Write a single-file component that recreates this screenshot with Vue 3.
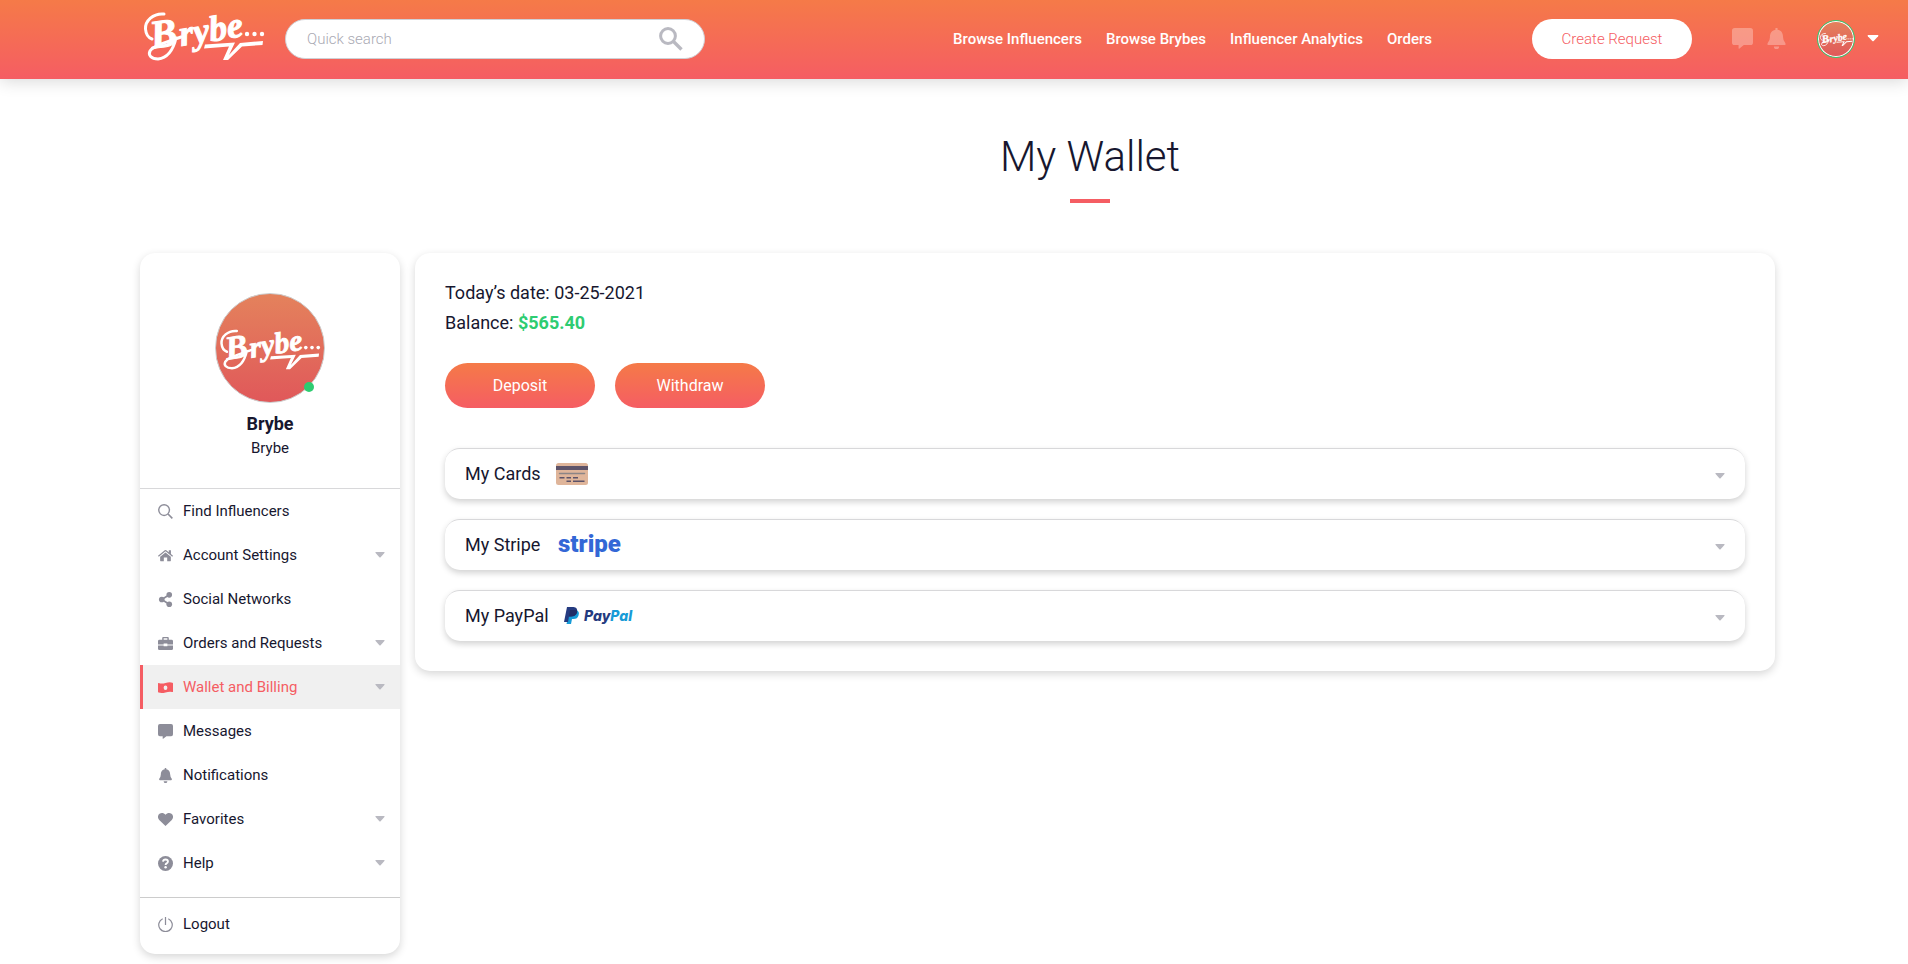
<script setup>
import { ref } from 'vue'

const query = ref('')
const nav = ['Browse Influencers', 'Browse Brybes', 'Influencer Analytics', 'Orders']
const menu = [
  { label: 'Find Influencers', icon: 'search' },
  { label: 'Account Settings', icon: 'home', more: true },
  { label: 'Social Networks', icon: 'share' },
  { label: 'Orders and Requests', icon: 'briefcase', more: true },
  { label: 'Wallet and Billing', icon: 'money', more: true, active: true },
  { label: 'Messages', icon: 'message' },
  { label: 'Notifications', icon: 'bell' },
  { label: 'Favorites', icon: 'heart', more: true },
  { label: 'Help', icon: 'help', more: true },
]
const methods = [
  { label: 'My Cards', logo: 'card' },
  { label: 'My Stripe', logo: 'stripe' },
  { label: 'My PayPal', logo: 'paypal' },
]
</script>

<template>
  <div class="page">
    <svg class="sprite" aria-hidden="true">
      <symbol id="brand" viewBox="0 0 121 53" overflow="visible">
        <g transform="rotate(-9 50 30)" fill="currentColor" stroke="currentColor" font-family="'Liberation Serif', serif" font-weight="700" font-style="italic">
          <text x="7" y="34" font-size="40" stroke-width="1">B</text>
          <text x="36" y="36" font-size="36" stroke-width="1">rybe</text>
        </g>
        <path d="M20 6C9 5 1 13 1.500 21C2 27 5 30 8 31M32 30C29 43 23 50 14 51C7 51 4 47 6 43C10 37 24 34 37 29" fill="none" stroke="currentColor" stroke-width="3" stroke-linecap="round" />
        <circle cx="103" cy="26" r="2.200" fill="currentColor" />
        <circle cx="110.500" cy="26" r="2.200" fill="currentColor" />
        <circle cx="118" cy="26" r="2.200" fill="currentColor" />
        <path d="M61 36.500L91 34.500L85 47L96 35L119 33L118.500 37L98 38.500L84 52H79L85 38.500L60 40.500Z" fill="currentColor" />
      </symbol>
      <symbol id="search" viewBox="0 0 16 16">
        <circle cx="6.500" cy="6.500" r="5.700" fill="none" stroke="currentColor" stroke-width="1.500" />
        <path d="M10.700 10.700L15.300 15.300" stroke="currentColor" stroke-width="1.700" />
      </symbol>
      <symbol id="home" viewBox="0 0 16 16">
        <path d="M0 8.300L7.200 2.300Q8 1.700 8.800 2.300L11.500 4.500V2.500H13.800V6.400L16 8.300L15.200 9.300L8 3.500L.8 9.300Z" fill="currentColor" />
        <path d="M2.300 9.300L8 4.700L13.700 9.300V13.500Q13.700 14 13.200 14H9.800V10H6.200V14H2.800Q2.300 14 2.300 13.500Z" fill="currentColor" />
      </symbol>
      <symbol id="share" viewBox="0 0 16 16">
        <path d="M12 3L4 8L12 13" fill="none" stroke="currentColor" stroke-width="1.800" />
        <circle cx="12" cy="3" r="3" fill="currentColor" />
        <circle cx="4" cy="8" r="3" fill="currentColor" />
        <circle cx="12" cy="13" r="3" fill="currentColor" />
      </symbol>
      <symbol id="briefcase" viewBox="0 0 16 16">
        <path d="M4.500 4V2Q4.500 1 5.500 1H10.500Q11.500 1 11.500 2V4H14.500Q16 4 16 5.500V9H10V8H6V9H0V5.500Q0 4 1.500 4ZM6 2.500V4H10V2.500ZM0 10H6V11H10V10H16V13.500Q16 15 14.500 15H1.500Q0 15 0 13.500Z" fill="currentColor" fill-rule="evenodd" />
      </symbol>
      <symbol id="money" viewBox="0 0 16 16">
        <path fill-rule="evenodd" d="M.8 3.200Q4 4.500 8 3.200Q12 1.900 15.400 2.800Q16 3 16 3.600V12.200Q16 13 15.200 12.800Q12 12.300 8 13.200Q4 14.300 .6 13.400Q0 13.200 0 12.600V3.800Q0 3 .8 3.200ZM8 5.800A2 2.400 0 1 0 8 10.600A2 2.400 0 1 0 8 5.800Z" fill="currentColor" />
      </symbol>
      <symbol id="message" viewBox="0 0 16 16">
        <path d="M2 0H14Q16 0 16 2V11Q16 13 14 13H9L5.500 15.800Q5 16 5 15.500V13H2Q0 13 0 11V2Q0 0 2 0Z" fill="currentColor" />
      </symbol>
      <symbol id="bell" viewBox="0 0 16 16">
        <path d="M7.200 0H8.800V1.300C12 1.800 13 4.500 13 7Q13 9.500 14.700 11.500Q15.300 13 14 13H2Q.7 13 1.300 11.500Q3 9.500 3 7C3 4.500 4 1.800 7.200 1.300ZM6 14H10Q10 16 8 16Q6 16 6 14Z" fill="currentColor" />
      </symbol>
      <symbol id="heart" viewBox="0 0 16 16">
        <path d="M8 15L1.300 8.500C-.7 6.300-.4 3.200 1.600 1.800C3.700.4 6.300.8 8 3C9.700.8 12.300.4 14.400 1.800C16.400 3.200 16.700 6.300 14.700 8.500Z" fill="currentColor" />
      </symbol>
      <symbol id="help" viewBox="0 0 16 16">
        <circle cx="8" cy="8" r="8" fill="currentColor" />
        <path d="M5.300 6Q5.600 3.700 8 3.700Q10.600 3.700 10.600 5.900Q10.600 7.200 9.200 7.900Q8.100 8.400 8.100 9.500" fill="none" stroke="#fff" stroke-width="2" />
        <circle cx="8.100" cy="12" r="1.300" fill="#fff" />
      </symbol>
      <symbol id="power" viewBox="0 0 16 16">
        <path d="M5 1.800A7.200 7.200 0 1 0 11 1.800M8 0V8.500" fill="none" stroke="currentColor" stroke-width="1.300" />
      </symbol>
      <symbol id="caret" viewBox="0 0 10 6">
        <path d="M.8 0H9.200Q10 .2 9.400 1L5.600 5.200Q5 5.700 4.400 5.200L.6 1Q0 .2.800 0Z" fill="currentColor" />
      </symbol>
    </svg>

    <header class="topbar">
      <a href="#" class="brand" aria-label="Brybe"><svg><use href="#brand" /></svg></a>
      <form class="search" role="search" @submit.prevent>
        <input v-model="query" type="text" placeholder="Quick search" aria-label="Quick search" />
        <button type="submit" aria-label="Search">
          <svg viewBox="0 0 24 24"><circle cx="9" cy="9" r="7.400" fill="none" stroke="currentColor" stroke-width="3" /><path d="M14.500 14.500L22.500 22.500" stroke="currentColor" stroke-width="3.400" /></svg>
        </button>
      </form>
      <nav class="nav">
        <a v-for="item in nav" :key="item" href="#">{{ item }}</a>
      </nav>
      <button type="button" class="create">Create Request</button>
      <div class="alerts">
        <button type="button" aria-label="Messages"><svg><use href="#message" /></svg></button>
        <button type="button" aria-label="Notifications"><svg><use href="#bell" /></svg></button>
      </div>
      <button type="button" class="account" aria-label="Account menu">
        <span class="face"><svg><use href="#brand" /></svg></span>
        <svg class="caret"><use href="#caret" /></svg>
      </button>
    </header>

    <div class="layout">
      <aside class="side">
        <div class="profile">
          <div class="avatar">
            <svg><use href="#brand" /></svg>
            <span class="online"></span>
          </div>
          <strong>Brybe</strong>
          <span>Brybe</span>
        </div>
        <nav class="menu">
          <a v-for="item in menu" :key="item.label" href="#" :class="{ active: item.active }">
            <svg class="icon"><use :href="'#' + item.icon" /></svg>
            <span>{{ item.label }}</span>
            <svg v-if="item.more" class="caret"><use href="#caret" /></svg>
          </a>
        </nav>
        <div class="menu leave">
          <a href="#"><svg class="icon"><use href="#power" /></svg><span>Logout</span></a>
        </div>
      </aside>

      <main class="content">
        <h1>My Wallet</h1>
        <section class="wallet">
          <p>Today’s date: 03-25-2021</p>
          <p>Balance: <b>$565.40</b></p>
          <div class="actions">
            <button type="button">Deposit</button>
            <button type="button">Withdraw</button>
          </div>
          <div class="methods">
            <button v-for="m in methods" :key="m.label" type="button" aria-expanded="false">
              <span>{{ m.label }}</span>
              <svg v-if="m.logo === 'card'" class="logo card" viewBox="0 0 32 22">
                <rect width="32" height="22" rx="2.500" fill="#dfb59a" />
                <rect y="3" width="32" height="4" fill="#5d5369" />
                <path d="M3.500 10.500H28.500" stroke="#8b8586" stroke-width="1.500" stroke-linecap="round" />
                <path d="M3.500 14.700H8.500M10.500 14.700H15M17 14.700H22M10.500 18.200H15M17 18.200H28.500" stroke="#5d5369" stroke-width="1.500" />
              </svg>
              <svg v-else-if="m.logo === 'stripe'" class="logo stripe" viewBox="0 0 68 30">
                <text x="0" y="22">stripe</text>
              </svg>
              <svg v-else class="logo paypal" viewBox="0 0 76 20">
                <path d="M6 4H12Q16 5 14.500 9.500Q13.500 13 9.500 13H8L7 18H2.500Z" fill="#179bd7" />
                <path d="M3 1H9.500Q14 1.500 13 6Q12 10.500 7 10.500H5L4 16H0Z" fill="#253b80" />
                <path d="M6 4H12.500Q14 6 12 8.500Q10.500 10.500 7 10.500H5Z" fill="#222d65" />
                <text x="20" y="15">Pay<tspan>Pal</tspan></text>
              </svg>
              <svg class="caret"><use href="#caret" /></svg>
            </button>
          </div>
        </section>
      </main>
    </div>
  </div>
</template>

<style>
body {
  margin: 0;
  background: #fff;
}
</style>

<style scoped>
.page {
  color: #17172f;
  font-family: Roboto, "Liberation Sans", sans-serif;
  font-size: 15px;
}
.page * {
  box-sizing: border-box;
}
.sprite {
  position: absolute;
  width: 121px;
  height: 60px;
  overflow: visible;
  pointer-events: none;
}
svg {
  display: block;
  flex: none;
}
a {
  color: inherit;
  text-decoration: none;
}
button {
  padding: 0;
  border: 0;
  background: none;
  color: inherit;
  font: inherit;
  cursor: pointer;
}
.topbar {
  display: flex;
  align-items: center;
  height: 79px;
  padding: 0 29px 2px 144px;
  background: linear-gradient(#f57a48, #f55d63);
  box-shadow: 0 2px 16px rgba(0, 0, 0, 0.16);
  color: #fff;
}
.brand svg {
  width: 121px;
  height: 53px;
  margin-top: -8px;
  overflow: visible;
}
.search {
  display: flex;
  align-items: center;
  width: 420px;
  height: 40px;
  margin-left: 20px;
  padding: 0 21px;
  border: 1px solid #d0d0d5;
  border-radius: 20px;
  background: #fff;
}
.search input {
  flex: 1;
  min-width: 0;
  padding: 0;
  border: 0;
  outline: 0;
  background: none;
  color: #17172f;
  font: inherit;
  font-weight: 300;
}
.search input::placeholder {
  color: #a9a9b3;
}
.search button,
.search svg {
  width: 24px;
  height: 24px;
  color: #b9b9c1;
}
.nav {
  display: flex;
  gap: 24px;
  margin-left: auto;
  font-weight: 500;
}
.create {
  width: 160px;
  height: 40px;
  margin-left: 100px;
  border-radius: 20px;
  background: #fff;
  color: #f55d63;
  font-weight: 300;
}
.alerts {
  display: flex;
  gap: 13px;
  margin-left: 40px;
}
.alerts svg {
  width: 21px;
  height: 21px;
  color: rgba(255, 255, 255, 0.3);
}
.account {
  display: flex;
  align-items: center;
  gap: 12px;
  margin-left: 30px;
}
.face {
  display: grid;
  place-items: center;
  width: 38px;
  height: 38px;
  border: 1px solid #2ecc71;
  border-radius: 50%;
  background: linear-gradient(#e4825c, #e0585a);
  box-shadow: inset 0 0 0 1px #fff;
}
.face svg {
  width: 33px;
  height: 16px;
  overflow: visible;
}
.account .caret {
  width: 12px;
  height: 7px;
}
.layout {
  display: flex;
  align-items: flex-start;
  padding: 0 128px 10px 140px;
}
.side,
.wallet {
  border-radius: 15px;
  background: #fff;
  box-shadow: 0 3px 8px rgba(0, 0, 0, 0.16);
}
.side {
  flex: none;
  width: 260px;
  margin-top: 174px;
  padding-bottom: 8px;
}
.profile {
  display: flex;
  flex-direction: column;
  align-items: center;
  height: 236px;
  padding-top: 40px;
  border-bottom: 1px solid #d8d8da;
}
.avatar {
  position: relative;
  display: grid;
  place-items: center;
  width: 110px;
  height: 110px;
  margin-bottom: 9px;
  border: 1px solid #ccc;
  border-radius: 50%;
  background: linear-gradient(#e4825c, #e0585a);
  color: #fff;
}
.avatar svg {
  width: 101px;
  height: 44px;
  overflow: visible;
}
.online {
  position: absolute;
  right: 10px;
  bottom: 10px;
  width: 10px;
  height: 10px;
  border-radius: 50%;
  background: #2ecc71;
}
.profile strong {
  font-size: 18px;
  line-height: 24px;
}
.profile > span {
  line-height: 24px;
}
.menu a {
  display: flex;
  align-items: center;
  height: 44px;
  padding: 0 15px 0 18px;
}
.icon {
  width: 15px;
  height: 15px;
  margin-right: 10px;
  color: #8d8d99;
}
.menu .caret,
.methods .caret {
  width: 10px;
  height: 6px;
  margin-left: auto;
  color: #b9b9c1;
}
.menu .active {
  padding-left: 15px;
  border-left: 3px solid #f55d63;
  background: #f0f0f0;
  color: #f55d63;
}
.active .icon {
  color: #f55d63;
}
.leave {
  margin-top: 12px;
  padding-top: 4px;
  border-top: 1px solid #ccc;
}
.content {
  flex: 1;
  min-width: 0;
}
h1 {
  margin: 53px 0 50px;
  font-size: 42px;
  font-weight: 300;
  line-height: 50px;
  text-align: center;
}
h1::after {
  display: block;
  width: 40px;
  height: 4px;
  margin: 17px auto 0;
  background: #f55d63;
  content: "";
}
.wallet {
  margin: 0 5px 0 15px;
  padding: 25px 30px 30px;
  font-size: 18px;
}
.wallet p {
  margin: 0;
  line-height: 30px;
}
.wallet b {
  color: #2ecc71;
}
.actions {
  display: flex;
  gap: 20px;
  margin: 25px 0 40px;
}
.actions button {
  width: 150px;
  height: 45px;
  border-radius: 23px;
  background: linear-gradient(#f57a48, #f55d63);
  color: #fff;
  font-size: 16px;
}
.methods {
  display: grid;
  gap: 20px;
}
.methods button {
  display: flex;
  align-items: center;
  height: 51px;
  padding: 0 20px 2px;
  border-top: 1px solid #d8d8da;
  border-radius: 15px;
  box-shadow: 0 3px 6px rgba(0, 0, 0, 0.18);
}
.methods .caret {
  margin-top: 6px;
}
.logo {
  margin-top: 2px;
}
.card {
  width: 32px;
  height: 22px;
  margin-left: 15px;
}
.stripe {
  width: 68px;
  height: 30px;
  margin-left: 18px;
  fill: #3367d6;
  font: 900 24px Roboto, sans-serif;
}
.paypal {
  width: 76px;
  height: 20px;
  margin-left: 15px;
  fill: #253b80;
  font: italic 800 14px Inter, sans-serif;
}
.paypal tspan {
  fill: #179bd7;
}
</style>
